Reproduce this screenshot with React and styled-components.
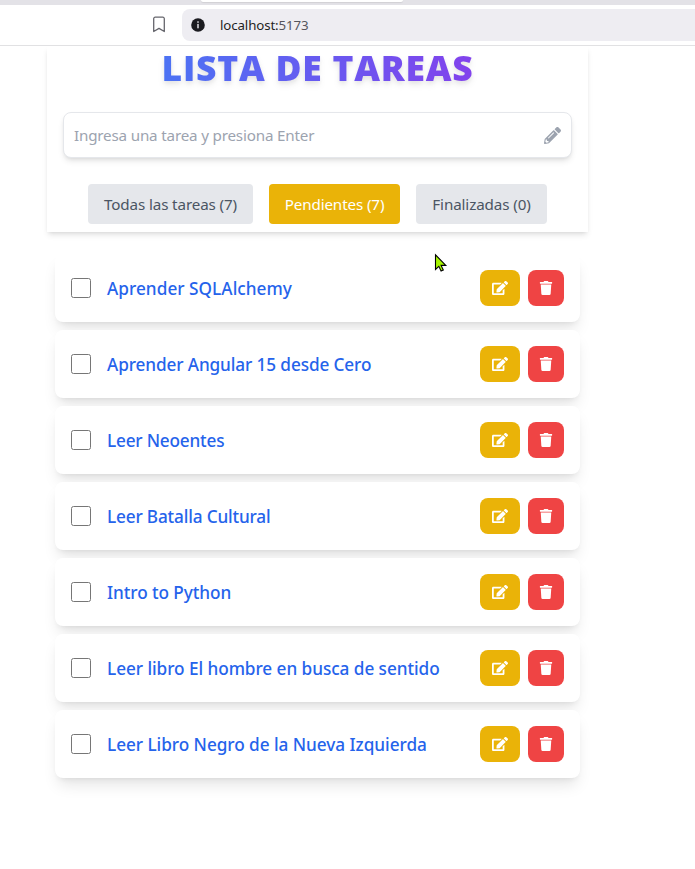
import React from 'react';
import styled, { createGlobalStyle } from 'styled-components';
import { FaEdit, FaPencilAlt, FaTrash } from 'react-icons/fa';

const GlobalStyle = createGlobalStyle`
  *, *::before, *::after { box-sizing: border-box; }
  body {
    margin: 0;
    background: #fff;
    font-family: "Noto Sans", "Open Sans", sans-serif;
    overflow: hidden;
  }
`;

const Window = styled.div`
  position: relative;
  height: 869px;
`;

const TabStrip = styled.div`
  height: 5px;
  padding-left: 201px;
  background: #e3e2e7;
`;

const ActiveTab = styled.div`
  width: 202px;
  height: 2px;
  border-radius: 0 0 5px 5px;
  background: #fff;
  box-shadow: 0 1px 1px rgba(0, 0, 0, 0.08);
`;

const Toolbar = styled.div`
  position: relative;
  z-index: 1;
  display: flex;
  align-items: center;
  height: 41px;
  padding-left: 152px;
  border-bottom: 1px solid #e1e1e3;
  background: #fff;
`;

const AddressBar = styled.div`
  display: flex;
  flex: 1;
  align-items: center;
  gap: 15px;
  height: 32px;
  margin-left: 16px;
  padding-left: 9px;
  border-radius: 8px 0 0 8px;
  background: #eeedf2;
`;

const Address = styled.span`
  font-size: 13.3px;
  letter-spacing: -0.12px;
  color: #1f1f24;
`;

const Port = styled.span`
  color: #55555c;
`;

const Content = styled.main`
  padding-left: 47px;
`;

const Panel = styled.header`
  width: 541px;
  height: 186px;
  padding: 0 16px;
  box-shadow: 0 4px 6px -1px rgba(0, 0, 0, 0.1), 0 2px 4px -2px rgba(0, 0, 0, 0.1);
`;

const Title = styled.h1`
  height: 66px;
  margin: 0;
  font-family: "Open Sans", sans-serif;
  font-size: 35.5px;
  font-weight: 800;
  line-height: 43px;
  letter-spacing: 0.75px;
  text-align: center;
  color: transparent;
  background: linear-gradient(to right, #3b82f6, #9333ea);
  background-clip: text;
  -webkit-background-clip: text;
  filter: drop-shadow(0 4px 3px rgba(0, 0, 0, 0.07)) drop-shadow(0 2px 2px rgba(0, 0, 0, 0.06));
`;

const Field = styled.div`
  display: flex;
  align-items: center;
  height: 46px;
  padding: 0 10px;
  border: 1px solid #e5e7eb;
  border-radius: 8px;
  background: #fff;
  box-shadow: 0 4px 6px -1px rgba(0, 0, 0, 0.1), 0 2px 4px -2px rgba(0, 0, 0, 0.1);
  color: #9ca3af;
`;

const TaskInput = styled.input`
  flex: 1;
  min-width: 0;
  padding: 0;
  border: 0;
  outline: 0;
  background: transparent;
  font-family: inherit;
  font-size: 15.2px;
  letter-spacing: -0.18px;
  &::placeholder { color: #9ca3af; opacity: 1; }
`;

const Filters = styled.nav`
  display: flex;
  justify-content: center;
  gap: 16px;
  margin-top: 26px;
`;

const FilterButton = styled.button`
  width: ${({ $wide }) => ($wide ? 165 : 131)}px;
  height: 40px;
  padding: 0;
  border: 0;
  border-radius: 4px;
  background: ${({ $active }) => ($active ? '#eab308' : '#e5e7eb')};
  color: ${({ $active }) => ($active ? '#fff' : '#4b5563')};
  font-family: inherit;
  font-size: 15.2px;
  letter-spacing: -0.12px;
  line-height: 24px;
`;

const TaskList = styled.ul`
  display: flex;
  flex-direction: column;
  gap: 8px;
  width: 525px;
  margin: 22px 0 0 8px;
  padding: 0;
  list-style: none;
`;

const TaskRow = styled.li`
  display: flex;
  align-items: center;
  height: 68px;
  padding: 0 16px;
  border-radius: 8px;
  background: #fff;
  box-shadow: 0 10px 15px -3px rgba(0, 0, 0, 0.1), 0 4px 6px -4px rgba(0, 0, 0, 0.1);
`;

const Checkbox = styled.input`
  appearance: none;
  width: 20px;
  height: 20px;
  margin: 0 16px 0 0;
  border: 1px solid #767676;
  border-radius: 2.5px;
  background: #fff;
`;

const TaskName = styled.span`
  flex: 1;
  padding-top: 2px;
  font-size: 17.2px;
  font-weight: 500;
  line-height: 28px;
  letter-spacing: ${({ $tracking }) => $tracking}px;
  white-space: nowrap;
  color: #2563eb;
`;

const ActionButton = styled.button`
  display: flex;
  align-items: center;
  justify-content: center;
  width: ${({ $danger }) => ($danger ? 36 : 40)}px;
  height: 36px;
  margin-left: ${({ $danger }) => ($danger ? 8 : 0)}px;
  padding: 0 0 1px;
  border: 0;
  border-radius: 8px;
  background: ${({ $danger }) => ($danger ? '#ef4444' : '#eab308')};
  color: #fff;
`;

const Pointer = styled.svg`
  position: absolute;
  left: 434px;
  top: 253px;
`;

const tasks = [
  { name: 'Aprender SQLAlchemy', tracking: 0.04 },
  { name: 'Aprender Angular 15 desde Cero', tracking: -0.11 },
  { name: 'Leer Neoentes', tracking: -0.19 },
  { name: 'Leer Batalla Cultural', tracking: -0.16 },
  { name: 'Intro to Python', tracking: -0.06 },
  { name: 'Leer libro El hombre en busca de sentido', tracking: -0.05 },
  { name: 'Leer Libro Negro de la Nueva Izquierda', tracking: -0.04 },
];

const BookmarkIcon = () => (
  <svg width="14" height="18" viewBox="0 0 14 18" fill="none" stroke="#66666d" strokeWidth="1.3">
    <path d="M3.2 1.2h7.6a1.5 1.5 0 0 1 1.5 1.5v12.8L7 12.4l-5.3 3.1V2.7a1.5 1.5 0 0 1 1.5-1.5z" strokeLinejoin="round" />
  </svg>
);

const InfoIcon = () => (
  <svg width="14" height="14" viewBox="0 0 14 14">
    <circle cx="7" cy="7" r="6.8" fill="#1b1b20" />
    <rect x="6.3" y="3.3" width="1.4" height="1.5" fill="#eeedf2" />
    <rect x="6.3" y="5.9" width="1.4" height="4.4" fill="#eeedf2" />
  </svg>
);

export default function App() {
  return (
    <Window>
      <GlobalStyle />
      <TabStrip><ActiveTab /></TabStrip>
      <Toolbar>
        <BookmarkIcon />
        <AddressBar>
          <InfoIcon />
          <Address>localhost:<Port>5173</Port></Address>
        </AddressBar>
      </Toolbar>
      <Content>
        <Panel>
          <Title>LISTA DE TAREAS</Title>
          <Field>
            <TaskInput placeholder="Ingresa una tarea y presiona Enter" />
            <FaPencilAlt size={17} />
          </Field>
          <Filters>
            <FilterButton $wide>Todas las tareas (7)</FilterButton>
            <FilterButton $active>Pendientes (7)</FilterButton>
            <FilterButton>Finalizadas (0)</FilterButton>
          </Filters>
        </Panel>
        <TaskList>
          {tasks.map(({ name, tracking }) => (
            <TaskRow key={name}>
              <Checkbox type="checkbox" />
              <TaskName $tracking={tracking}>{name}</TaskName>
              <ActionButton><FaEdit size={16} /></ActionButton>
              <ActionButton $danger><FaTrash size={14} /></ActionButton>
            </TaskRow>
          ))}
        </TaskList>
      </Content>
      <Pointer width="14" height="20" viewBox="0 0 14 20">
        <path d="M1.5 1.8v14.6l3.3-3.1 2.3 4.7 2.2-1-2.2-4.6h4.7z" fill="#a6f500" stroke="#000" strokeWidth="1.1" />
      </Pointer>
    </Window>
  );
}
